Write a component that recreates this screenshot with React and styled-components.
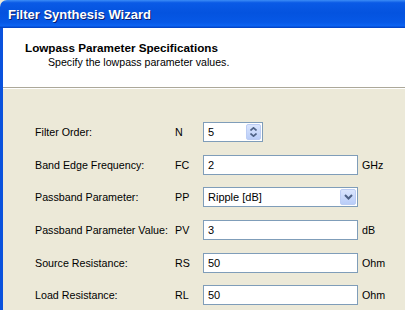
import React from "react"
import styled, { createGlobalStyle } from "styled-components"

const GlobalStyle = createGlobalStyle`
	html, body {
		margin: 0;
		padding: 0;
		background: #ece9d8;
		overflow: hidden;
	}
	body {
		font-family: "Liberation Sans", Arial, sans-serif;
	}
`

const Window = styled.div`
	width: 405px;
	height: 310px;
	display: flex;
	flex-direction: column;
	overflow: hidden;
`

const TitleBar = styled.div`
	height: 28px;
	flex: none;
	display: flex;
	align-items: center;
	padding: 0 0 0 8px;
	border-radius: 7px 0 0 0;
	background: linear-gradient(
		to bottom,
		#3b8cf6 0%,
		#0a5ae6 10%,
		#0453df 45%,
		#0658e6 80%,
		#0b63f2 92%,
		#003dbd 100%
	);
	box-sizing: border-box;
`

const Title = styled.span`
	color: #fff;
	font-family: "Liberation Sans", Arial, sans-serif;
	font-weight: bold;
	font-size: 13px;
	text-shadow: 1px 1px 0 #0a1e6e;
	padding-top: 1px;
`

const Frame = styled.div`
	flex: 1;
	display: flex;
	flex-direction: column;
	border-left: 3px solid #0a52dd;
	box-shadow: inset 1px 0 0 #2d6ff0;
	min-height: 0;
`

const Header = styled.div`
	height: 60px;
	flex: none;
	background: #fff;
	border-bottom: 1px solid #aca899;
	box-sizing: border-box;
	padding: 13px 0 0 22px;
`

const HeaderTitle = styled.div`
	font-weight: bold;
	font-size: 11.7px;
	color: #000;
	line-height: 13px;
`

const HeaderSub = styled.div`
	font-size: 10.6px;
	color: #000;
	line-height: 14px;
	padding: 1px 0 0 23px;
`

const Body = styled.div`
	flex: 1;
	background: #ece9d8;
	padding: 33px 0 0 32px;
	border-top: 1px solid #fff;
`

const Form = styled.div`
	display: grid;
	grid-template-columns: 140px 28px 155px auto;
	grid-auto-rows: 20px;
	row-gap: 12.7px;
	align-items: center;
	font-size: 10.7px;
	color: #000;
`

const Label = styled.span`
	white-space: nowrap;
`

const Unit = styled.span`
	padding-left: 4px;
`

const Field = styled.div`
	height: 20px;
	width: ${p => p.$width || "155px"};
	box-sizing: border-box;
	border: 1px solid #7f9db9;
	background: #fff;
	display: flex;
	align-items: stretch;
`

const Value = styled.span`
	flex: 1;
	padding-left: 4px;
	font-size: 11px;
	line-height: 18px;
`

const XpButton = styled.div`
	width: ${p => p.$width};
	margin: 1px;
	border-radius: 2px;
	background: linear-gradient(to bottom, #dae5fd, #b9cdf8);
	border: 1px solid #bccdf4;
	box-sizing: border-box;
	display: flex;
	flex-direction: column;
	align-items: center;
	justify-content: center;
	gap: 2px;
`

const Chevron = ({ up }) => (
	<svg width="7" height="4" viewBox="0 0 7 4">
		<path
			d={up ? "M0.5 3.5 L3.5 0.8 L6.5 3.5" : "M0.5 0.5 L3.5 3.2 L6.5 0.5"}
			fill="none"
			stroke="#4d6185"
			strokeWidth="1.6"
		/>
	</svg>
)

const DownArrow = () => (
	<svg width="9" height="6" viewBox="0 0 9 6">
		<path d="M1 1 L4.5 4.5 L8 1" fill="none" stroke="#4d6185" strokeWidth="2" />
	</svg>
)

const rows = [
	{ label: "Band Edge Frequency:", abbr: "FC", value: "2", unit: "GHz" },
	{ label: "Passband Parameter:", abbr: "PP", value: "Ripple [dB]", combo: true },
	{ label: "Passband Parameter Value:", abbr: "PV", value: "3", unit: "dB" },
	{ label: "Source Resistance:", abbr: "RS", value: "50", unit: "Ohm" },
	{ label: "Load Resistance:", abbr: "RL", value: "50", unit: "Ohm" },
]

const App = () => {
	return (
		<>
			<GlobalStyle />
			<Window>
				<TitleBar>
					<Title>Filter Synthesis Wizard</Title>
				</TitleBar>
				<Frame>
					<Header>
						<HeaderTitle>Lowpass Parameter Specifications</HeaderTitle>
						<HeaderSub>Specify the lowpass parameter values.</HeaderSub>
					</Header>
					<Body>
						<Form>
							<Label>Filter Order:</Label>
							<Label>N</Label>
							<Field $width="60px">
								<Value>5</Value>
								<XpButton $width="15px">
									<Chevron up />
									<Chevron />
								</XpButton>
							</Field>
							<span />
							{rows.map(r => (
								<React.Fragment key={r.abbr}>
									<Label>{r.label}</Label>
									<Label>{r.abbr}</Label>
									<Field>
										<Value>{r.value}</Value>
										{r.combo && (
											<XpButton $width="16px">
												<DownArrow />
											</XpButton>
										)}
									</Field>
									<Unit>{r.unit}</Unit>
								</React.Fragment>
							))}
						</Form>
					</Body>
				</Frame>
			</Window>
		</>
	)
}

export default App
